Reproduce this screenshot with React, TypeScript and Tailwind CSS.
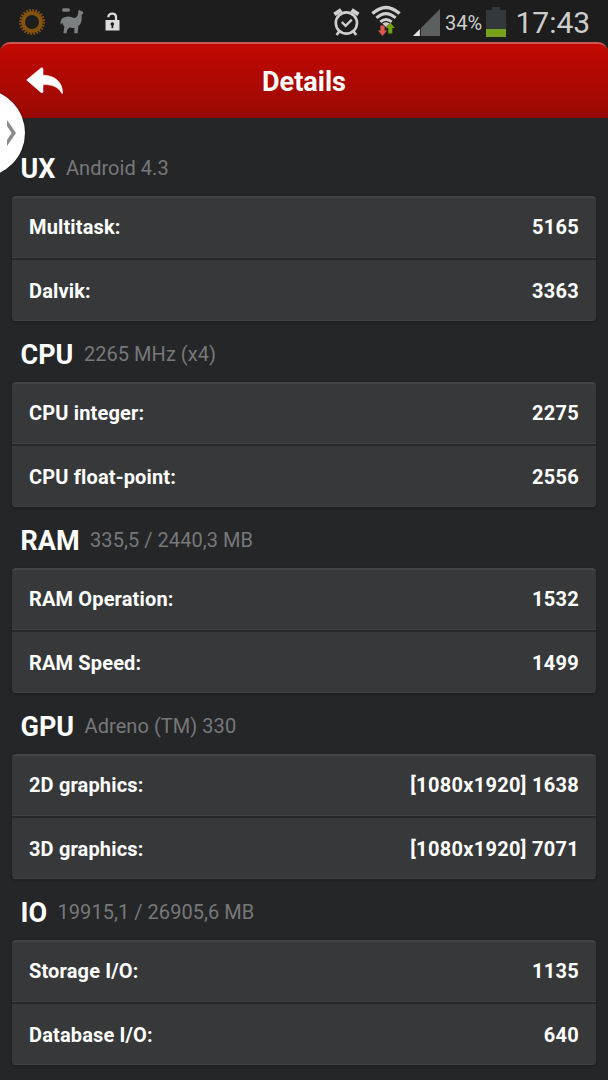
interface Row {
  label: string
  value: string
}

interface Section {
  title: string
  info: string
  rows: Row[]
}

const sections: Section[] = [
  {
    title: 'UX',
    info: 'Android 4.3',
    rows: [
      { label: 'Multitask:', value: '5165' },
      { label: 'Dalvik:', value: '3363' },
    ],
  },
  {
    title: 'CPU',
    info: '2265 MHz (x4)',
    rows: [
      { label: 'CPU integer:', value: '2275' },
      { label: 'CPU float-point:', value: '2556' },
    ],
  },
  {
    title: 'RAM',
    info: '335,5 / 2440,3 MB',
    rows: [
      { label: 'RAM Operation:', value: '1532' },
      { label: 'RAM Speed:', value: '1499' },
    ],
  },
  {
    title: 'GPU',
    info: 'Adreno (TM) 330',
    rows: [
      { label: '2D graphics:', value: '[1080x1920] 1638' },
      { label: '3D graphics:', value: '[1080x1920] 7071' },
    ],
  },
  {
    title: 'IO',
    info: '19915,1 / 26905,6 MB',
    rows: [
      { label: 'Storage I/O:', value: '1135' },
      { label: 'Database I/O:', value: '640' },
    ],
  },
]

function SunIcon() {
  return (
    <svg className="h-7 w-7" viewBox="0 0 28 28" fill="none" stroke="#85530f">
      <circle cx="14" cy="14" r="8.9" strokeWidth="3.8" />
      <circle cx="14" cy="14" r="11.4" strokeWidth="3.2" strokeDasharray="1.6 1.38" />
    </svg>
  )
}

function LlamaIcon() {
  return (
    <svg className="h-[27px] w-6" viewBox="0 0 72 81" fill="#7c7f7f">
      <rect x="6" y="4" width="24" height="10" rx="5" />
      <path d="M55 11 L58 8 L61 11 Q69 12 70 16 Q70 21 65 23 L65 40 Q63 52 55 57 L53 79 H43 L43 62 Q36 64 29 61 L22 68 L20 79 H10 L12 66 L13 58 L9 54 L7 47 Q4 50 2 53 Q0 33 14 31 Q28 25 42 33 Q51 33 54 22 Z" />
    </svg>
  )
}

function UnlockIcon() {
  return (
    <svg className="h-[19px] w-[15px]" viewBox="0 0 15 19">
      <path d="M3.4 5.2 V4.6 C3.4 0.6 11 0.4 11 5 V9" fill="none" stroke="#dcdcdc" strokeWidth="2.3" />
      <rect x="0.5" y="8" width="14" height="10.5" rx="0.6" fill="#dcdcdc" />
      <circle cx="7.3" cy="12" r="1.8" fill="#1d1d1d" />
      <rect x="6.5" y="12" width="1.7" height="4.2" fill="#1d1d1d" />
    </svg>
  )
}

function AlarmIcon() {
  return (
    <svg className="h-7 w-[27px]" viewBox="0 0 27 28" fill="none" stroke="#cfcfcf">
      <circle cx="13.4" cy="15" r="10.6" strokeWidth="2.6" />
      <path d="M8.8 14 L12.6 17.8 L18.8 11.6" strokeWidth="2.4" />
      <path d="M1.4 6.4 L8.2 1.8 M25.4 6.4 L18.6 1.8" strokeWidth="4" />
      <path d="M6.2 23.4 L3.6 27 M20.6 23.4 L23.2 27" strokeWidth="2.6" />
    </svg>
  )
}

function WifiIcon() {
  return (
    <svg className="h-[31px] w-[30px]" viewBox="0 0 30 31" fill="none" stroke="#cfcfcf">
      <path d="M1.4 8.6 Q15 -3.6 28.6 8.6" strokeWidth="3.3" />
      <path d="M5.4 12.9 Q15 4.4 24.6 12.9" strokeWidth="3.1" />
      <path d="M9.3 16.8 Q15 12 20.7 16.8" strokeWidth="2.9" />
      <path d="M11.4 18.6 Q15 16 18.6 18.6 L15 22 Z" fill="#cfcfcf" stroke="none" />
      <path d="M9.4 20.5 H13.6 V25.4 H16 L11.5 31 L7 25.4 H9.4 Z" fill="#e0574e" stroke="none" />
      <path d="M17.3 28.4 V23 H14.8 L19.3 17.6 L23.8 23 H21.3 V28.4 Z" fill="#74a010" stroke="none" />
    </svg>
  )
}

function SignalIcon() {
  return (
    <svg className="h-[27px] w-[27px]" viewBox="0 0 27 27">
      <path d="M27 0 V27 H0 Z" fill="#5c5f5f" />
      <path d="M7 20 V27 H0 Z" fill="#e4e4e4" />
      <path d="M7.4 19 V27" stroke="#1d1d1d" strokeWidth="1" />
    </svg>
  )
}

function BatteryIcon() {
  return (
    <svg className="h-[30px] w-5" viewBox="0 0 20 30">
      <path d="M0 3 H6 V0 H14 V3 H20 V22 H0 Z" fill="#35383a" />
      <rect y="22" width="20" height="8" fill="#77a21c" />
    </svg>
  )
}

function BackIcon() {
  return (
    <svg className="h-7 w-[38px]" viewBox="0 0 38 28" fill="#fff">
      <path
        d="M0.6 13 L15 1 Q16.8 0 17 2 V8.2 C28 8.4 36.4 14 36.6 26 Q36.4 27 35.6 26 C32 19.6 26 17.4 17 17.6 V24.6 Q16.8 26.6 15 25.4 Z"
        stroke="#fff"
        strokeWidth="0.6"
        strokeLinejoin="round"
      />
    </svg>
  )
}

function StatusBar() {
  return (
    <div className="flex h-[42px] items-start bg-[#1d1d1d] text-[#cdcdcd]">
      <div className="mt-2 ml-[17.5px]"><SunIcon /></div>
      <div className="mt-[7px] ml-[14.5px]"><LlamaIcon /></div>
      <div className="mt-3 ml-[21px]"><UnlockIcon /></div>
      <div className="mt-[7.5px] ml-[212.5px]"><AlarmIcon /></div>
      <div className="mt-[5px] ml-[11.5px]"><WifiIcon /></div>
      <div className="mt-[9px] ml-[12px]"><SignalIcon /></div>
      <span className="mt-2.5 ml-[5px] w-10 text-[20px] leading-[26px] whitespace-nowrap">34%</span>
      <div className="mt-[7px] ml-px"><BatteryIcon /></div>
      <span className="mt-[5px] ml-[9.5px] text-[30px] leading-9 whitespace-nowrap">17:43</span>
    </div>
  )
}

function SectionBlock({ section }: { section: Section }) {
  return (
    <section>
      <div className="flex h-[61px] items-start pt-4 pl-[8.5px]">
        <h2 className="text-[27px] leading-9 font-bold text-white">{section.title}</h2>
        <span className="ml-[10.5px] text-[20px] leading-[34px] tracking-[0.05px] text-[#77787a]">{section.info}</span>
      </div>
      <div className="flex h-[125px] flex-col overflow-hidden rounded border-t-2 border-[#434446] bg-[#373839] shadow-[0_1px_2px_1px_#1f2022]">
        {section.rows.map((row) => (
          <div
            key={row.label}
            className="flex h-[62px] items-center justify-between border-b-2 border-[#262729] px-[17px] pb-0.5 text-[20px] font-bold text-white shadow-[inset_0_-1px_0_#404143] last:h-auto last:flex-1 last:border-b-0 last:pt-px last:pb-0"
          >
            <span className="tracking-[0.15px]">{row.label}</span>
            <span className="tracking-[0.3px]">{row.value}</span>
          </div>
        ))}
      </div>
    </section>
  )
}

export default function App() {
  return (
    <div className="relative h-[1080px] w-[608px] overflow-hidden bg-[#252628] font-['Roboto',sans-serif]">
      <StatusBar />
      <div className="bg-[#1d1d1d]">
        <header className="flex h-[76px] items-center rounded-t-[10px] border-t-2 border-[#cc5650] bg-linear-to-b from-[#c30802] to-[#980902] px-[26px]">
          <button aria-label="Back" className="w-[38px]">
            <BackIcon />
          </button>
          <h1 className="flex-1 pt-0.5 pr-[38px] text-center text-[27px] font-bold text-white">Details</h1>
        </header>
      </div>

      <main className="px-3 pt-[17px]">
        {sections.map((section) => (
          <SectionBlock key={section.title} section={section} />
        ))}
      </main>

      {/* Edge panel handle */}
      <div className="absolute top-[89px] -left-[63px] flex h-[88px] w-[88px] items-center justify-end rounded-full bg-white pr-[9px] shadow-[0_0_2px_rgba(0,0,0,0.6)]">
        <svg className="h-[26px] w-[9px]" viewBox="0 0 9 26" fill="#8b8b8b">
          <path d="M0 0 L9 13 L0 26 V20 L4.6 13 L0 6 Z" />
        </svg>
      </div>
    </div>
  )
}
